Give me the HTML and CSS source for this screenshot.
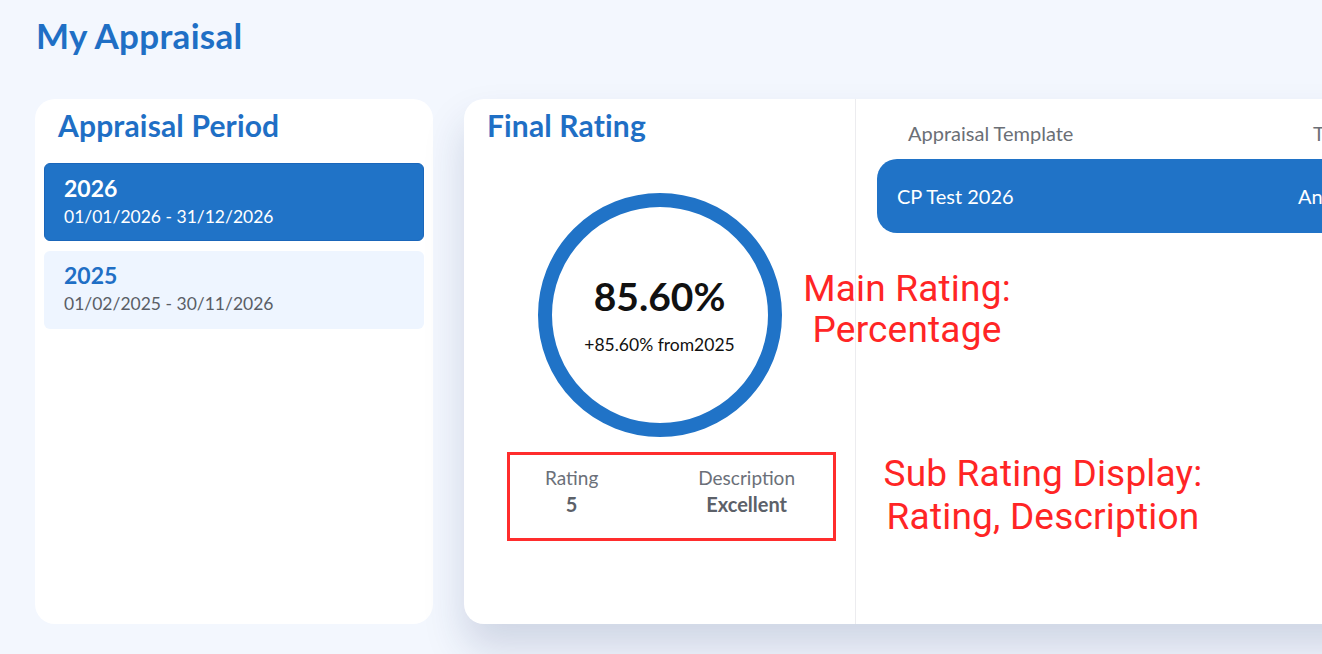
FILE: index.html
```html
<!DOCTYPE html>
<html lang="en">
<head>
<meta charset="utf-8">
<title>My Appraisal</title>
<link rel="stylesheet" href="styles.css">
</head>
<body>
<div class="page">
  <h1 class="page-title">My Appraisal</h1>
  <div class="cards">
    <section class="period-card">
      <h2 class="card-title">Appraisal Period</h2>
      <div class="period-list">
        <div class="period-item active">
          <div class="period-year">2026</div>
          <div class="period-dates">01/01/2026 - 31/12/2026</div>
        </div>
        <div class="period-item">
          <div class="period-year">2025</div>
          <div class="period-dates">01/02/2025 - 30/11/2026</div>
        </div>
      </div>
    </section>
    <section class="main-card">
      <div class="rating-pane">
        <h2 class="card-title">Final Rating</h2>
        <div class="ring">
          <div class="ring-value">85.60%</div>
          <div class="ring-sub">+85.60% from2025</div>
        </div>
        <div class="sub-rating">
          <div class="sub-col">
            <div class="sub-label">Rating</div>
            <div class="sub-value">5</div>
          </div>
          <div class="sub-col">
            <div class="sub-label">Description</div>
            <div class="sub-value">Excellent</div>
          </div>
        </div>
      </div>
      <div class="template-pane">
        <div class="tpl-head">
          <div class="tpl-col">Appraisal Template</div>
          <div class="tpl-col">Type</div>
        </div>
        <div class="tpl-row">
          <div class="tpl-cell">CP Test 2026</div>
          <div class="tpl-cell">Annual</div>
        </div>
      </div>
      <div class="note note-main">Main Rating:<br>Percentage</div>
      <div class="note note-sub">Sub Rating Display:<br>Rating, Description</div>
    </section>
  </div>
</div>
</body>
</html>
```

FILE: styles.css
```css
html, body {
  margin: 0;
  padding: 0;
}
body {
  width: 1322px;
  height: 654px;
  overflow: hidden;
  background: #f3f7fe;
  font-family: Lato, "Noto Sans", sans-serif;
  color: #333;
}
.page {
  padding: 14px 0 0 35px;
}
.page-title {
  margin: 0 0 0 1px;
  font-size: 35px;
  line-height: 42px;
  font-weight: 700;
  color: #1f6fc5;
  letter-spacing: 0.3px;
}
.cards {
  display: flex;
  gap: 31px;
  margin-top: 43px;
  height: 525px;
}
.period-card {
  flex: 0 0 398px;
  background: #fff;
  border-radius: 20px;
  padding: 8px 9px;
  box-sizing: border-box;
}
.card-title {
  margin: 0;
  font-size: 30px;
  line-height: 36px;
  font-weight: 700;
  color: #1f6fc5;
  letter-spacing: 0.15px;
}
.period-card .card-title {
  padding-left: 14px;
}
.period-list {
  display: flex;
  flex-direction: column;
  gap: 10px;
  margin-top: 20px;
}
.period-item {
  height: 78px;
  box-sizing: border-box;
  border-radius: 6px;
  background: #eef5ff;
  padding: 10px 20px 0;
}
.period-item.active {
  background: #2073c7;
  border: 1px solid #1a66ba;
  padding: 10px 19px 0;
}
.period-year {
  font-size: 23px;
  line-height: 28px;
  font-weight: 700;
  color: #1f6fc5;
}
.period-dates {
  margin-top: 3px;
  font-size: 17.5px;
  line-height: 24px;
  color: #5a5e66;
}
.active .period-year,
.active .period-dates {
  color: #fff;
}
.main-card {
  position: relative;
  flex: 0 0 1000px;
  display: flex;
  background: #fff;
  border-radius: 20px;
  box-shadow: 0 24px 40px rgba(30, 50, 100, 0.17);
}
.rating-pane {
  flex: 0 0 391px;
  border-right: 1px solid #ececef;
  padding: 8px 0 0;
  display: flex;
  flex-direction: column;
}
.rating-pane .card-title {
  padding-left: 23px;
}
.ring {
  align-self: center;
  margin-top: 50px;
  width: 244px;
  height: 244px;
  box-sizing: border-box;
  border: 14px solid #2073c7;
  border-radius: 50%;
  display: flex;
  flex-direction: column;
  align-items: center;
  padding-top: 66px;
}
.ring-value {
  font-size: 39px;
  line-height: 46px;
  font-weight: 700;
  color: #111;
}
.ring-sub {
  margin-top: 15px;
  font-size: 17.5px;
  line-height: 21px;
  color: #111;
}
.sub-rating {
  margin: 15px 0 0 43px;
  width: 329px;
  height: 89px;
  box-sizing: border-box;
  border: 3px solid #ff2d2d;
  display: flex;
  justify-content: space-between;
  padding: 11px 38px 0 35px;
}
.sub-col {
  text-align: center;
}
.sub-label {
  font-size: 19px;
  line-height: 24px;
  color: #6b7079;
}
.sub-value {
  margin-top: 2px;
  font-size: 20px;
  line-height: 24px;
  font-weight: 700;
  color: #5c6169;
}
.template-pane {
  flex: 1;
  padding: 22px 0 0 21px;
}
.tpl-head {
  display: flex;
  padding-left: 31px;
  height: 38px;
}
.tpl-head .tpl-col {
  flex: 0 0 405px;
  font-size: 20px;
  line-height: 24px;
  color: #6b6f76;
}
.tpl-row {
  display: flex;
  align-items: center;
  height: 74px;
  background: #2073c7;
  border-radius: 20px;
  padding-left: 20px;
}
.tpl-cell {
  flex: 0 0 401px;
  font-size: 20px;
  line-height: 24px;
  color: #fff;
}
.note {
  position: absolute;
  color: #ff2525;
  font-family: Roboto, "Liberation Sans", sans-serif;
  font-size: 37px;
  letter-spacing: 0.2px;
  text-align: center;
  white-space: nowrap;
}
.note-main {
  left: 293px;
  width: 300px;
  top: 169px;
  line-height: 41px;
}
.note-sub {
  left: 379px;
  width: 400px;
  top: 353px;
  line-height: 43px;
}
```
